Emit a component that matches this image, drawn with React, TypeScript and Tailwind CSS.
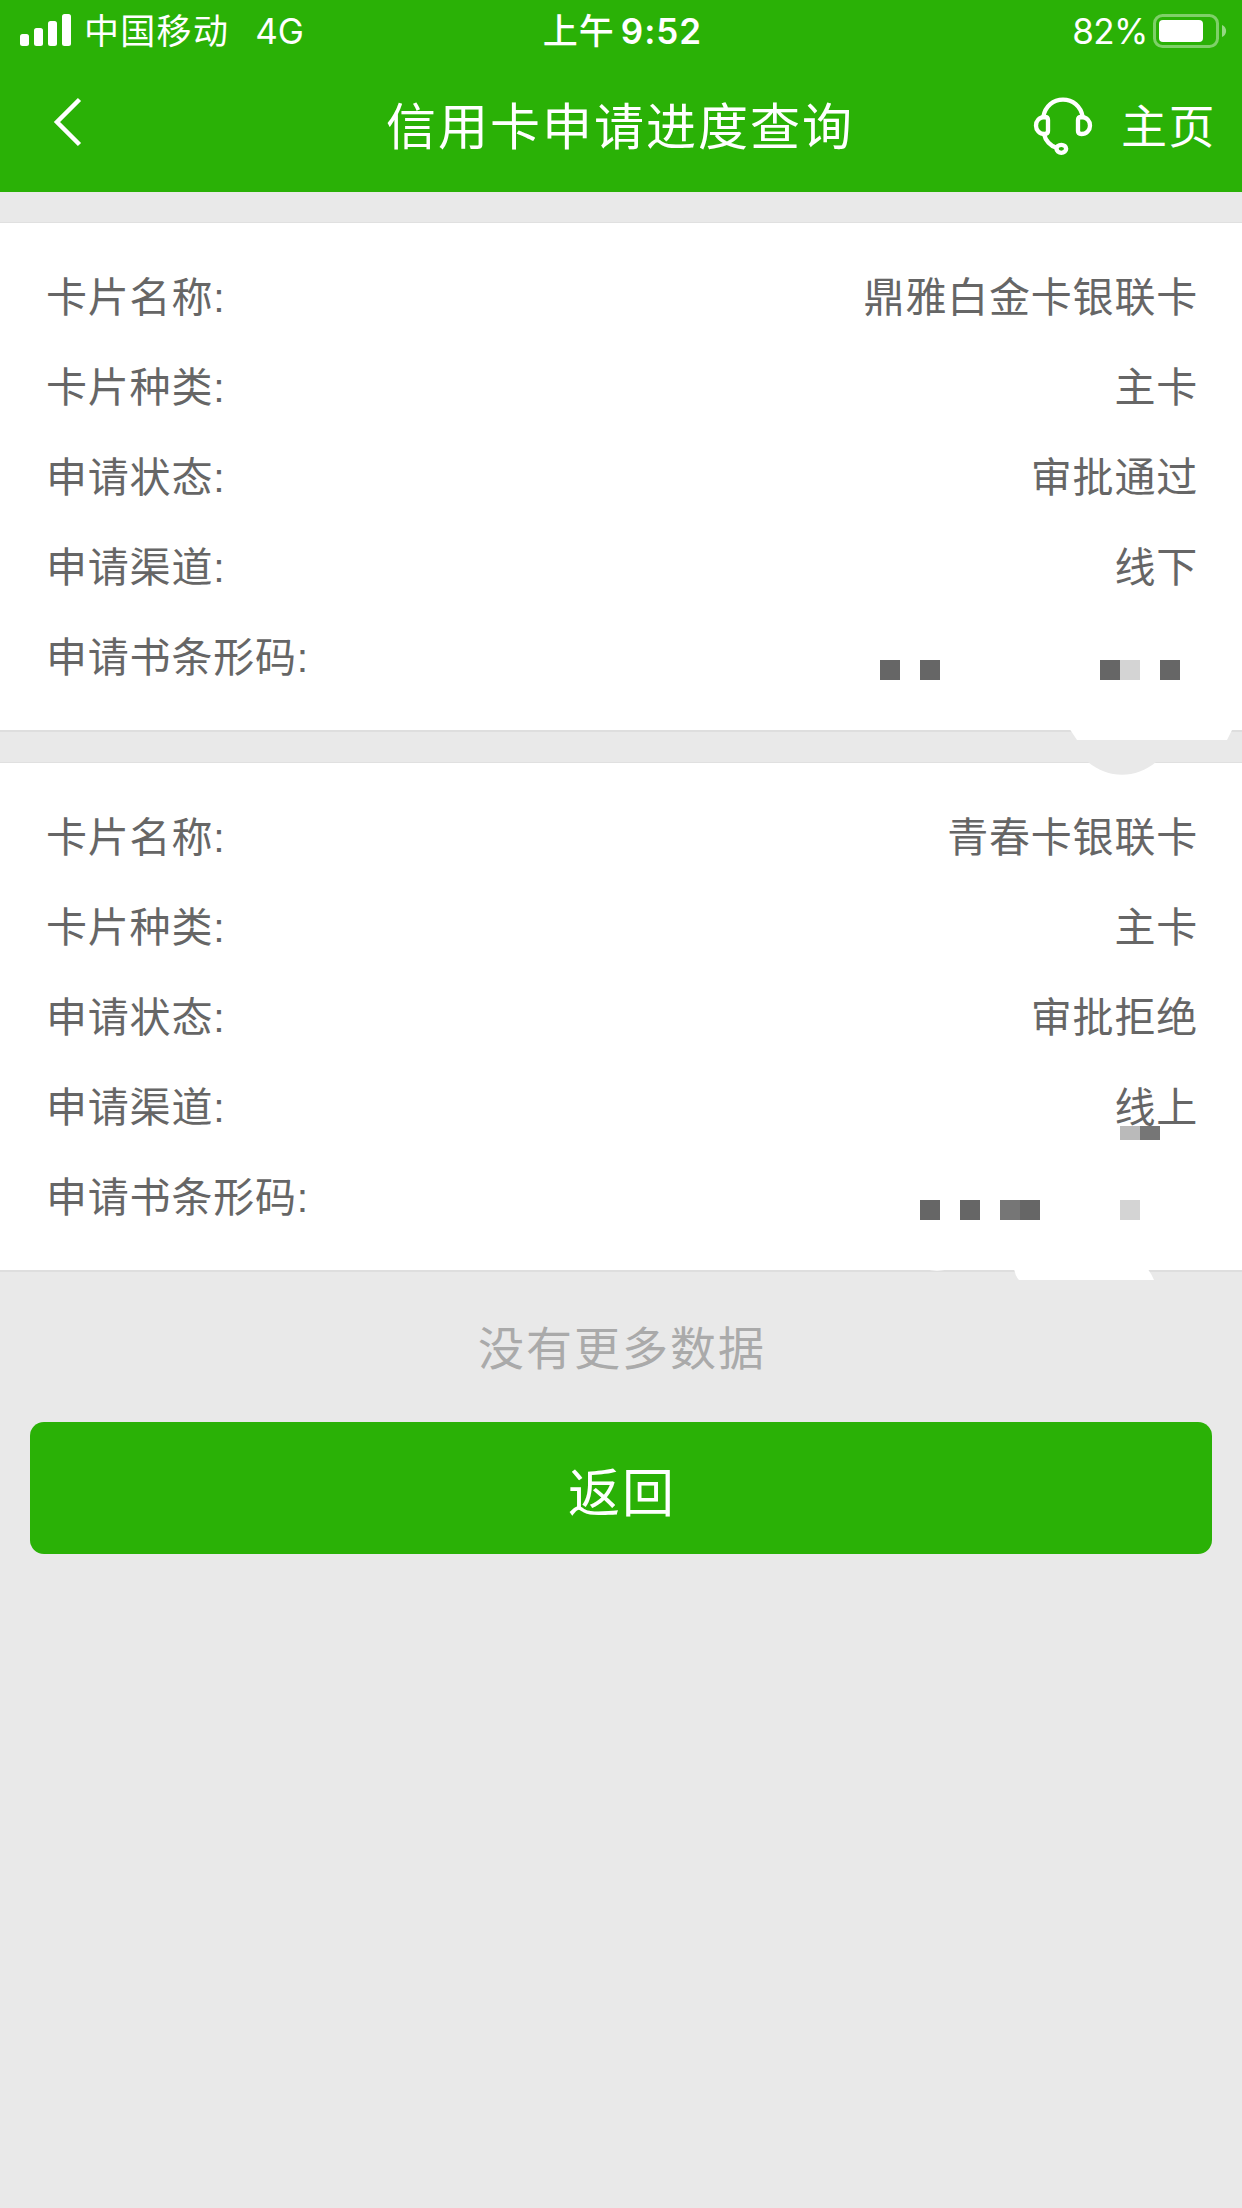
import type { ReactNode } from 'react';

type Field = { label: string; value?: string };

function SignalIcon() {
  return (
    <svg width="52" height="34" viewBox="0 0 52 34" fill="#fff" className="shrink-0">
      <rect x="0" y="20" width="9" height="12" rx="2.5" />
      <rect x="14" y="14" width="9" height="18" rx="2.5" />
      <rect x="28" y="7" width="9" height="25" rx="2.5" />
      <rect x="42" y="0" width="9" height="32" rx="2.5" />
    </svg>
  );
}

function BatteryIcon() {
  return (
    <svg width="74" height="34" viewBox="0 0 74 34" className="shrink-0">
      <rect x="1.5" y="1.5" width="63" height="31" rx="8" fill="none" stroke="#fff" strokeOpacity=".4" strokeWidth="3" />
      <rect x="6" y="6" width="44" height="22" rx="4" fill="#fff" />
      <path d="M69 11 C74.5 13 74.5 21 69 23 Z" fill="#fff" fillOpacity=".5" />
    </svg>
  );
}

function HeadsetIcon() {
  return (
    <svg width="66" height="66" viewBox="150 282 198 198" fill="none" stroke="#fff" strokeWidth="13" className="shrink-0">
      <path d="M190 350 C196 318 220 299 249 299 C278 299 302 318 308 350" />
      <path d="M194 351 C177 352 168 364 168 377 C168 390 178 402 194 402 C201 402 204 399 204 393 V360 C204 354 201 351 194 351 Z" />
      <path d="M304 351 C321 352 330 364 330 377 C330 390 320 402 304 402 C297 402 294 399 294 393 V360 C294 354 297 351 304 351 Z" />
      <path d="M192 402 C196 422 212 438 229 443" />
      <ellipse cx="244" cy="446.500" rx="14.500" ry="12" />
    </svg>
  );
}

function Card({ fields, children }: { fields: Field[]; children?: ReactNode }) {
  return (
    <section className="relative h-[510px] border-t border-b-2 border-t-[#e0e0e0] border-b-[#dedede] bg-white pl-[46px] pr-[44px] pt-[30px] font-['Liberation_Sans','Noto_Sans_CJK_SC',sans-serif] text-[41px] leading-[90px] tracking-[0.8px] text-[#666]">
      {fields.map((f) => (
        <div key={f.label} className="flex h-[90px] justify-between whitespace-nowrap">
          <span>{f.label}</span>
          <span>{f.value}</span>
        </div>
      ))}
      {children}
    </section>
  );
}

const first: Field[] = [
  { label: '卡片名称:', value: '鼎雅白金卡银联卡' },
  { label: '卡片种类:', value: '主卡' },
  { label: '申请状态:', value: '审批通过' },
  { label: '申请渠道:', value: '线下' },
  { label: '申请书条形码:' },
];

const second: Field[] = [
  { label: '卡片名称:', value: '青春卡银联卡' },
  { label: '卡片种类:', value: '主卡' },
  { label: '申请状态:', value: '审批拒绝' },
  { label: '申请渠道:', value: '线上' },
  { label: '申请书条形码:' },
];

export default function App() {
  return (
    <div className="flex h-[2208px] w-[1242px] flex-col overflow-hidden bg-[#e9e9e9] font-['Inter','Noto_Sans_CJK_SC',sans-serif]">
      <header className="h-[192px] bg-[#2ab106] text-white">
        <div className="grid h-[62px] grid-cols-[1fr_auto_1fr] items-center pl-[18px] pr-[15px] text-[35px] leading-[62px]">
          <div className="flex items-center pl-[2px]">
            <SignalIcon />
            <span className="ml-[12px] tracking-[1.3px]">中国移动</span>
            <span className="ml-[26px]">4G</span>
          </div>
          <div className="flex items-center gap-[6px] font-medium">
            <span className="tracking-[1px]">上午</span>
            <span className="font-semibold tracking-[1px]">9:52</span>
          </div>
          <div className="flex items-center justify-end gap-[5px]">
            <span className="tracking-[-0.5px]">82%</span>
            <BatteryIcon />
          </div>
        </div>
        <div className="grid h-[130px] grid-cols-[1fr_auto_1fr] items-center pl-[24px] pr-[26px]">
          <svg width="34" height="50" viewBox="0 0 34 50" fill="none" stroke="#fff" strokeWidth="4.500" className="-mt-[10px] ml-[26px]">
            <path d="M29.500 2.500 L7 25 L29.500 47.500" />
          </svg>
          <h1 className="text-[50px] tracking-[2px]">信用卡申请进度查询</h1>
          <div className="flex items-center justify-end gap-[25px]">
            <HeadsetIcon />
            <span className="-mt-[2px] text-[46px] tracking-[1.5px]">主页</span>
          </div>
        </div>
      </header>

      <main className="flex flex-col pt-[30px]">
        <Card fields={first}>
          <svg className="absolute left-[842px] top-[397px]" width="400" height="160" viewBox="842 620 400 160">
            <g fill="#666">
              <rect x="880" y="660" width="20" height="20" />
              <rect x="920" y="660" width="20" height="20" />
              <rect x="1100" y="660" width="20" height="20" />
              <rect x="1120" y="660" width="20" height="20" fill="#d4d4d4" />
              <rect x="1160" y="660" width="20" height="20" />
            </g>
            <path d="M1069 728 L1077 740 H1227 L1233 728 Z" fill="#fff" />
          </svg>
        </Card>
        <div className="h-[30px]" />
        <Card fields={second}>
          <svg className="absolute left-[842px] top-[-3px]" width="400" height="530" viewBox="842 760 400 530">
            <path d="M1088 760 V762 C1108 779 1136 779 1156 762 V760 Z" fill="#e9e9e9" />
            <rect x="1120" y="1126" width="20" height="14" fill="#bababa" />
            <rect x="1140" y="1126" width="20" height="14" fill="#767676" />
            <g fill="#666">
              <rect x="920" y="1200" width="20" height="20" />
              <rect x="960" y="1200" width="20" height="20" />
              <rect x="1000" y="1200" width="20" height="20" fill="#767676" />
              <rect x="1020" y="1200" width="20" height="20" />
              <rect x="1120" y="1200" width="20" height="20" fill="#d4d4d4" />
            </g>
            <path d="M1014 1268 Q1015 1276 1019 1280 H1154 Q1151 1273 1147 1268 Z" fill="#fff" />
            <ellipse cx="937" cy="1269.500" rx="8" ry="1.200" fill="#fff" />
          </svg>
        </Card>
        <p className="h-[150px] pt-[1px] pl-[2px] text-center text-[46px] leading-[150px] tracking-[2px] text-[#aaa]">没有更多数据</p>
        <button className="mx-[30px] h-[132px] rounded-[14px] bg-[#2ab106] pt-[12px] pl-[2px] text-[52px] tracking-[2px] text-white">返回</button>
      </main>
    </div>
  );
}
